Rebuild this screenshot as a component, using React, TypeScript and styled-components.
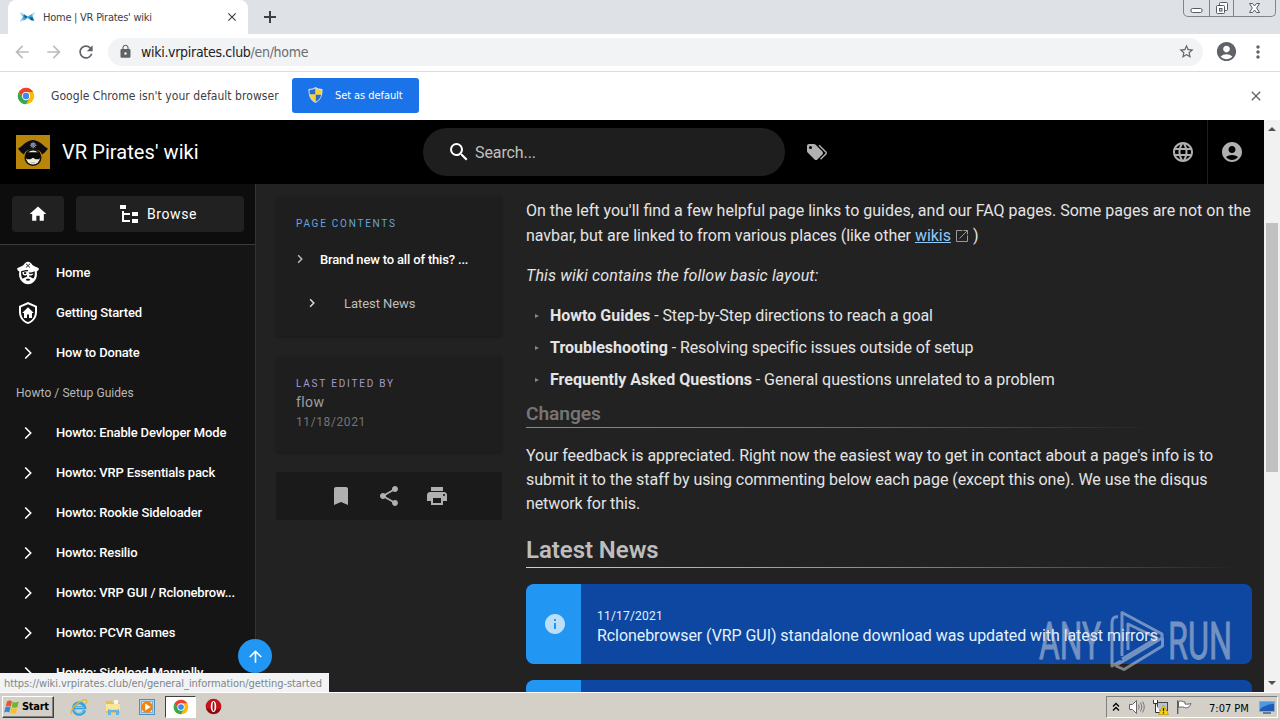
import { ReactNode } from "react";
import styled, { createGlobalStyle } from "styled-components";
import {
  MdAccountCircle,
  MdArrowBack,
  MdArrowForward,
  MdArrowUpward,
  MdBookmark,
  MdClose,
  MdHome,
  MdInfo,
  MdLanguage,
  MdLock,
  MdMoreVert,
  MdPrint,
  MdRefresh,
  MdSearch,
  MdShare,
  MdStarBorder,
} from "react-icons/md";

const GlobalStyle = createGlobalStyle`
  * { box-sizing: border-box; }
  body {
    margin: 0;
    overflow: hidden;
    font-family: Roboto, sans-serif;
  }
  svg { display: block; flex: none; }
  p, h2, h3, ul { margin: 0; padding: 0; }
`;

const uiFont = `"DejaVu Sans Condensed", "DejaVu Sans", sans-serif`;

const Screen = styled.div`
  position: relative;
  display: flex;
  flex-direction: column;
  width: 1280px;
  height: 720px;
  overflow: hidden;
  background: #fff;
`;

/* ---------- text ---------- */

interface LabelProps {
  $size?: number;
  $spacing?: number;
  $color?: string;
  $weight?: number;
}

const Label = styled.span<LabelProps>`
  font-size: ${(props) => props.$size ?? 13}px;
  letter-spacing: ${(props) => props.$spacing ?? 0}px;
  color: ${(props) => props.$color ?? "inherit"};
  font-weight: ${(props) => props.$weight ?? 400};
  white-space: nowrap;
`;

const UiLabel = styled(Label)`
  font-family: ${uiFont};
`;

/* ---------- browser frame ---------- */

const TabStrip = styled.div`
  display: flex;
  height: 34px;
  padding-left: 8px;
  background: #dee1e6;
`;

const Tab = styled.div`
  display: flex;
  align-items: center;
  width: 240px;
  padding: 0 9px 0 12px;
  background: #fff;
  border-radius: 8px 8px 0 0;
  color: #3c4043;
`;

const TabTitle = styled.div`
  flex: 1;
  padding-left: 8px;
  line-height: 16px;
`;

const NewTab = styled.div`
  display: flex;
  align-items: center;
  padding-left: 15px;
`;

const WindowControls = styled.div`
  display: flex;
  width: 93px;
  height: 17px;
  margin-left: auto;
  margin-right: 4px;
  border: 1px solid #80848c;
  border-top: 0;
  border-radius: 0 0 5px 5px;
`;

const WindowButton = styled.div<{ $width: number }>`
  display: flex;
  justify-content: center;
  width: ${(props) => props.$width}px;

  &:not(:last-child) {
    border-right: 1px solid #80848c;
  }
`;

const Toolbar = styled.div`
  display: flex;
  align-items: center;
  height: 38px;
  padding: 0 12px 2px;
  border-bottom: 1px solid #dadce0;
  color: #5f6368;
`;

const NavButton = styled.div<{ $dim?: boolean }>`
  width: 32px;
  color: ${(props) => (props.$dim ? "#babcbe" : "#5f6368")};
`;

const AddressBar = styled.div`
  display: flex;
  align-items: center;
  width: 1095px;
  height: 28px;
  padding: 0 8px 0 10px;
  border-radius: 14px;
  background: #f1f3f4;
`;

const Url = styled.div`
  flex: 1;
  padding-left: 8px;
`;

const ToolbarActions = styled.div`
  display: flex;
  align-items: center;
  gap: 10px;
  margin-left: 12px;
`;

const InfoBar = styled.div`
  display: flex;
  align-items: center;
  height: 48px;
  padding: 0 16px 1px 17px;
`;

const InfoText = styled.div`
  width: 241px;
  margin-left: 16px;
  padding-bottom: 2px;
`;

const DefaultButton = styled.div`
  display: flex;
  align-items: center;
  gap: 12px;
  width: 127px;
  height: 35px;
  margin-bottom: 1px;
  padding-left: 16px;
  border-radius: 3px;
  background: #1a73e8;
`;

const InfoClose = styled.div`
  margin-left: auto;
  color: #5f6368;
`;

/* ---------- wiki page ---------- */

const Viewport = styled.div`
  display: flex;
  height: 572px;
`;

const Page = styled.div`
  width: 1264px;
  height: 572px;
  overflow: hidden;
  background: #222;
  color: #fff;
`;

const Header = styled.header`
  display: flex;
  align-items: center;
  height: 64px;
  padding-left: 16px;
  background: #000;
`;

const SiteTitle = styled.div`
  width: 373px;
  padding-left: 12px;
`;

const SearchBox = styled.div`
  display: flex;
  align-items: center;
  gap: 4px;
  width: 362px;
  height: 48px;
  padding-left: 24px;
  border-radius: 24px;
  background: #1e1e1e;
`;

const TagButton = styled.div`
  margin-left: 20px;
  color: #b0b0b0;
`;

const HeaderAction = styled.div<{ $divider?: boolean }>`
  display: flex;
  align-items: center;
  justify-content: center;
  width: ${(props) => (props.$divider ? 57 : 48)}px;
  height: 64px;
  padding-right: ${(props) => (props.$divider ? 8 : 0)}px;
  border-left: ${(props) => (props.$divider ? "1px solid #1e1e1e" : "0")};
  color: #b0b0b0;
`;

const HeaderActions = styled.div`
  display: flex;
  margin-left: auto;
`;

const Columns = styled.div`
  display: flex;
  height: 508px;
`;

const Sidebar = styled.nav`
  width: 256px;
  border-right: 1px solid #333;
  background: #151515;
`;

const SidebarTop = styled.div`
  display: flex;
  gap: 12px;
  height: 61px;
  padding: 12px 11px 12px 12px;
  border-bottom: 1px solid #3a3a3a;
  background: #0d0d0d;
`;

const SidebarButton = styled.div<{ $grow?: boolean }>`
  display: flex;
  flex: ${(props) => (props.$grow ? "1" : "0 0 52px")};
  align-items: center;
  justify-content: center;
  gap: 6px;
  height: 36px;
  padding-right: ${(props) => (props.$grow ? 6 : 0)}px;
  border-radius: 4px;
  background: #212121;
`;

const NavList = styled.div`
  padding-top: 7px;
`;

const NavItem = styled.div`
  display: flex;
  align-items: center;
  gap: 16px;
  height: 40px;
  padding-left: 16px;
`;

const NavIcon = styled.div`
  display: flex;
  justify-content: center;
  width: 24px;
  padding-top: 1px;
`;

const NavHeading = styled.div`
  display: flex;
  align-items: center;
  height: 40px;
  padding: 2px 0 0 16px;
`;

const Aside = styled.aside`
  width: 226px;
  margin-left: 20px;
  padding-top: 12px;
`;

const Card = styled.div<{ $height: number }>`
  display: flex;
  flex-direction: column;
  height: ${(props) => props.$height}px;
  margin-bottom: 20px;
  padding: 20px 20px 0;
  border-radius: 4px;
  background: #1e1e1e;
  box-shadow: 0 1px 3px rgba(0, 0, 0, 0.3);
`;

const CardTitle = styled.div`
  height: 16px;
  line-height: 15px;
  font-size: 0;
`;

const CardLine = styled.div`
  height: 20px;
  line-height: 20px;
  font-size: 0;
`;

const TocItem = styled.div<{ $nested?: boolean }>`
  display: flex;
  align-items: center;
  gap: ${(props) => (props.$nested ? 24 : 12)}px;
  height: ${(props) => (props.$nested ? 46 : 42)}px;
  margin-top: ${(props) => (props.$nested ? 0 : 6)}px;
  margin-left: ${(props) => (props.$nested ? 8 : -4)}px;
`;

const ActionBar = styled.div`
  display: flex;
  align-items: center;
  justify-content: center;
  gap: 24px;
  height: 48px;
  background: #1a1a1a;
  color: #b0b0b0;
`;

const Article = styled.main`
  width: 726px;
  margin-left: 24px;
  padding-top: 15px;
  font-size: 16px;
  line-height: 24px;
  color: #e4e4e4;
`;

const Paragraph = styled.p<{ $gap: number; $top?: number }>`
  margin-top: ${(props) => props.$top ?? 0}px;
  margin-bottom: ${(props) => props.$gap}px;
`;

const Line = styled.span<{ $spacing?: number; $height?: number }>`
  display: flex;
  align-items: center;
  height: ${(props) => props.$height ?? 24}px;
  letter-spacing: ${(props) => props.$spacing ?? 0}px;
  white-space: pre;
`;

const WikiLink = styled.a`
  color: #90caf9;
  text-decoration: underline;
`;

const ExternalIcon = styled.span`
  padding: 0 3px;
  color: #9a9a9a;
`;

const Bullet = styled.li<{ $spacing: number }>`
  display: flex;
  align-items: center;
  height: 32px;
  padding-left: 9px;
  letter-spacing: ${(props) => props.$spacing}px;
  white-space: pre;

  strong {
    letter-spacing: 0;
  }

  &::before {
    content: "";
    width: 0;
    margin-right: 11px;
    border-left: 4px solid #888;
    border-top: 2.5px solid transparent;
    border-bottom: 2.5px solid transparent;
  }
`;

const SubHeading = styled.h3`
  height: 32px;
  padding-top: 6px;
  font-size: 19.2px;
  font-weight: 600;
  line-height: 24px;
  letter-spacing: -0.1px;
  color: #757575;
  background: linear-gradient(to right, #8a8a8a, #707070 40%, rgba(117, 117, 117, 0) 87%)
    bottom / 100% 1px no-repeat;
`;

const Heading = styled.h2`
  height: 36px;
  font-size: 24px;
  font-weight: 600;
  line-height: 37px;
  letter-spacing: -0.05px;
  color: #bdbdbd;
  background: linear-gradient(to right, #d0d0d0, #8a8a8a 50%, rgba(117, 117, 117, 0) 98%)
    bottom / 100% 1px no-repeat;
`;

const Notice = styled.div`
  display: flex;
  height: 80px;
  margin-top: 16px;
  overflow: hidden;
  border-radius: 8px;
  background: #0d47a1;
  color: #e3f2fd;
`;

const NoticeIcon = styled.div`
  display: flex;
  align-items: center;
  justify-content: center;
  width: 55px;
  padding-left: 2px;
  background: #2196f3;
  color: #bbdefb;
`;

const NoticeBody = styled.div`
  display: flex;
  flex-direction: column;
  padding: 22px 0 0 16px;
  line-height: 20px;
`;

const Scrollbar = styled.div`
  display: flex;
  flex-direction: column;
  align-items: center;
  width: 16px;
  height: 572px;
  padding: 7px 0;
  background: #f1f1f1;
`;

const ScrollThumb = styled.div`
  width: 12px;
  height: 249px;
  margin: 92px 0 auto;
  background: #c1c1c1;
`;

const ScrollArrow = styled.div<{ $down?: boolean }>`
  width: 0;
  border: 4px solid transparent;
  border-${(props) => (props.$down ? "top" : "bottom")}: 4px solid #505050;
  border-${(props) => (props.$down ? "bottom" : "top")}-width: 0;
`;

/* ---------- floating bits ---------- */

const ScrollTop = styled.div`
  position: absolute;
  left: 238px;
  top: 639px;
  display: flex;
  align-items: center;
  justify-content: center;
  width: 34px;
  height: 34px;
  border-radius: 50%;
  background: #2196f3;
  color: #fff;
`;

const StatusBubble = styled.div`
  position: absolute;
  left: 0;
  top: 673px;
  width: 329px;
  height: 19px;
  padding-left: 4px;
  background: #f1f3f4;
  line-height: 21px;
  font-size: 0;
`;

const Watermark = styled.svg`
  position: absolute;
  left: 1036px;
  top: 606px;
  opacity: 0.5;
`;

/* ---------- taskbar ---------- */

const Taskbar = styled.div`
  display: flex;
  align-items: center;
  height: 28px;
  padding: 0 2px;
  border-top: 1px solid #fff;
  background: #d4d0c8;
`;

const StartButton = styled.div`
  display: flex;
  align-items: center;
  gap: 2px;
  width: 52px;
  height: 22px;
  padding-left: 1px;
  border: 1px solid;
  border-color: #fff #404040 #404040 #fff;
  box-shadow: inset -1px -1px #808080;
  color: #000;
`;

const QuickLaunch = styled.div`
  display: flex;
  align-items: center;
  margin-left: 8px;
`;

const TaskIcon = styled.div<{ $active?: boolean }>`
  display: flex;
  align-items: center;
  justify-content: center;
  width: ${(props) => (props.$active ? 31 : 34)}px;
  height: 22px;
  margin-left: ${(props) => (props.$active ? 1 : 0)}px;
  border: ${(props) => (props.$active ? "1px solid" : "0")};
  border-color: #404040 #fff #fff #404040;
  background: ${(props) => (props.$active ? "#fff" : "transparent")};
`;

const Tray = styled.div`
  display: flex;
  align-items: center;
  width: 172px;
  height: 22px;
  margin-left: auto;
  padding-left: 5px;
  border: 1px solid;
  border-color: #808080 #fff #fff #808080;
`;

const TrayItem = styled.div<{ $width: number }>`
  width: ${(props) => props.$width}px;
`;

/* ---------- drawings ---------- */

function MdiIcon({ size = 24, path }: { size?: number; path: string }) {
  return (
    <svg width={size} height={size} viewBox="0 0 24 24" fill="currentColor">
      <path fillRule="evenodd" d={path} />
    </svg>
  );
}

const fileTree =
  "M3,3H9V7H3V3M15,10H21V14H15V10M15,17H21V21H15V17M13,13H7V18H13V20H7L5,20V9H7V11H13V13Z";
const tagMultiple =
  "M5.5,9A1.5,1.5 0 0,0 7,7.5A1.5,1.5 0 0,0 5.5,6A1.5,1.5 0 0,0 4,7.5A1.5,1.5 0 0,0 5.5,9M17.41,11.58C17.77,11.94 18,12.44 18,13C18,13.55 17.78,14.05 17.41,14.41L12.41,19.41C12.05,19.77 11.55,20 11,20C10.45,20 9.95,19.78 9.58,19.41L2.59,12.42C2.22,12.05 2,11.55 2,11V6C2,4.89 2.89,4 4,4H9C9.55,4 10.05,4.22 10.41,4.58L17.41,11.58M13.54,5.71L14.54,4.71L21.41,11.58C21.78,11.94 22,12.45 22,13C22,13.55 21.78,14.05 21.42,14.41L16.04,19.79L15.04,18.79L20.75,13L13.54,5.71Z";
const shieldHome =
  "M21,11C21,16.55 17.16,21.74 12,23C6.84,21.74 3,16.55 3,11V5L12,1L21,5V11M12,21C15.75,20 19,15.54 19,11.22V6.3L12,3.18L5,6.3V11.22C5,15.54 8.25,20 12,21M12,6.2L6.2,12H8V17H11V13.5H13V17H16V12H17.8Z";

function Chevron({ size = 24, color = "#fff" }: { size?: number; color?: string }) {
  return (
    <svg width={size} height={size} viewBox="0 0 24 24" fill="none">
      <path stroke={color} strokeWidth={size < 20 ? 2.2 : 1.6} d="M9.200 6.500l5.500 5.500-5.500 5.500" />
    </svg>
  );
}

function ExternalLinkIcon() {
  return (
    <svg width="16" height="16" viewBox="0 0 16 16" fill="none" stroke="currentColor">
      <path d="M8.500 2.500h-6v11h11v-6M9.500 2.500h4v4M13.500 2.500l-8 8" />
    </svg>
  );
}

function PirateIcon() {
  return (
    <svg width="24" height="24" viewBox="0 0 24 24">
      <path fill="#fff" d="M12 .8c2 0 3.200 1.600 4.500 3.100 1.800 1.600 4.300 1.800 6.500 3.600-.4 1.500-1.200 2.600-2.300 3.100.7 3.400.2 6.800-2.400 9.600-1.700 2-3.900 3-6.300 3s-4.600-1-6.300-3c-2.600-2.800-3.100-6.200-2.400-9.600C2.200 10.100 1.400 9 1 7.500c2.200-1.800 4.700-2 6.500-3.600C8.800 2.400 10 .8 12 .8z" />
      <path stroke="#151515" strokeWidth=".9" d="M10 2.800l4 3.700M14 2.800l-4 3.700" />
      <path fill="#151515" d="M5.200 10.300c2.200-.9 4.500-1.200 6.800-1.200v1.200c-2 0-4 .3-5.700 1 .1 1 .3 1.800.9 2.500 1.200.9 2.400.9 3.600.2l.4 1.400c-1.200.5-2.200 1.100-3.200 1.700-.7.400-1.300.4-1.900.1-.9-2-1.200-4.500-.9-6.900z" />
      <path fill="#151515" d="M8 11.300h2.200v1.700H8zM12.500 11.500c2 .2 4.300-.3 6.200-1.300.3 2.600 0 4.900-1 7-.7.200-1.400 0-2-.5-.8-.6-1.700-1-2.700-1.200v-1h2.500c.9-.3 1.700-1 1.900-1.900-1.300.4-2.500.5-3.900.4z" />
      <path fill="#151515" d="M10.200 18c1.200-.5 2.400-.5 3.600 0l.3 1.300c-1.400.6-2.800.6-4.200 0z" />
    </svg>
  );
}

function SiteLogo() {
  return (
    <svg width="34" height="34" viewBox="0 0 34 34">
      <rect width="34" height="34" fill="#b8860b" />
      <circle cx="17" cy="22.500" r="8.500" fill="#111" />
      <circle cx="17" cy="22.500" r="7" fill="#f3ead2" />
      <path fill="#0c0c12" d="M2 13.500C6 12 9 6 17 5c8 1 11 7 15 8.500-2 3-4 5-6 6-1-4-5-5-9-5s-8 1-9 5c-2-1-4-3-6-6z" />
      <path fill="#080808" d="M10 17.200h14V23l-1 1.200h-3.500L17 22.800l-2.500 1.400H11L10 23z" />
      <path stroke="#aaa" strokeWidth="1" d="M15 27.700h4" />
      <circle cx="17.200" cy="10.200" r="2" fill="none" stroke="#8e9cac" strokeWidth="1" />
      <path stroke="#8e9cac" strokeWidth=".8" d="M17.200 6.800v6.800M13.800 10.200h6.800M14.900 7.900l4.600 4.600M19.500 7.900l-4.600 4.600" />
    </svg>
  );
}

function ChromeLogo({ size = 16 }: { size?: number }) {
  return (
    <svg width={size} height={size} viewBox="0 0 48 48">
      <circle cx="24" cy="24" r="22" fill="#fbbc05" />
      <path fill="#ea4335" d="M24 13h19a22 22 0 0 0-38 0l9.500 16.500z" />
      <path fill="#34a853" d="M5 13a22 22 0 0 0 19 33l9.500-16.500L24 24l-9.500 5.500z" />
      <circle cx="24" cy="24" r="11" fill="#fff" />
      <circle cx="24" cy="24" r="8.500" fill="#4285f4" />
    </svg>
  );
}

function ShieldBadge() {
  return (
    <svg width="15" height="16" viewBox="0 0 15 16">
      <path fill="#d5dde8" d="M7.500 0C9 1.200 12 2 14.500 2c.3 6.500-1.500 11-7 14C2 13 .2 8.500.5 2 3 2 6 1.200 7.500 0z" />
      <path fill="#2a6cc8" d="M7.500 1.300V7.500H1.600V3C4 3 6 2.300 7.500 1.300zM7.500 7.500h5.600c-.5 3.500-2.100 5.600-5.600 7.300z" />
      <path fill="#f8d22e" d="M7.500 1.300C9 2.300 11 3 13.400 3c0 1.700 0 3.200-.3 4.500H7.500zM1.800 7.500h5.700v7.300C4 13.100 2.300 11 1.800 7.500z" />
    </svg>
  );
}

function Favicon() {
  return (
    <svg width="15" height="12" viewBox="0 0 15 12">
      <path fill="#3fa9dd" d="M0 1.500l4 1.500 3.500 2.500L11 3.500 15 1.500 12.500 5 14.500 10 11 9.500 7.500 7 5 9 0 10.500 3 6z" />
      <path fill="#1d5380" d="M4 4l3.500 1.500L5 7.500zM9.500 6l3 .5 1 3-3-1z" />
      <path fill="#c5eafa" d="M11.500 4l3.500-2.500-2 3zM0 1.500L4 3 3 4.500zM0 10.500L3 8l1 1.500z" />
    </svg>
  );
}

function WindowsFlag() {
  return (
    <svg width="16" height="16" viewBox="0 0 16 16">
      <path fill="#e8562a" d="M3 2.500C5 1 6.500 1.500 8 2.300L6.800 7.500C5.200 6.600 3.500 6.500 1.700 7.500z" />
      <path fill="#6fb43a" d="M8.800 2.700c2 1 3.700.9 6-.1L13.500 8c-2 1-3.800.9-5.800-.1z" />
      <path fill="#3d83d6" d="M1.500 8.300c1.800-1 3.500-.9 5.100 0l-1.300 5.200C3.700 12.600 2 12.600.2 13.500z" />
      <path fill="#f5c225" d="M7.500 8.800c2 1 3.800.9 5.800-.1L12 13.900c-2 .9-3.800.9-5.800-.1z" />
    </svg>
  );
}

function ExplorerIcon() {
  return (
    <svg width="18" height="18" viewBox="0 0 18 18">
      <path fill="none" stroke="#35a3e0" strokeWidth="3" d="M14.600 12.300A5.700 5.700 0 1 1 14.800 9.800H5" />
      <path fill="none" stroke="#a5dcf5" strokeWidth=".8" d="M13.500 13.500A5.800 5.800 0 0 1 4 11.500M5 9.400h9" />
      <path fill="none" stroke="#e9b92d" strokeWidth="1.300" d="M2 15.500c-3-.5 1-7 6-10.500s9-4.500 8.800-2c0 1-.5 2-1.300 3" />
    </svg>
  );
}

function FolderIcon() {
  return (
    <svg width="18" height="18" viewBox="0 0 18 18">
      <path fill="#e8bf55" d="M2 3h6l1 2h7v10H2z" />
      <path fill="#f9e69c" d="M2 6h14v7H2z" />
      <path fill="#f7f7e8" d="M10 2h4v4h-4z" />
      <path fill="#63b6e2" d="M4 11h11v6h-3v-3H7v3H4z" />
      <path fill="#b8e2f5" d="M5 11h9v1H5z" />
    </svg>
  );
}

function PlayerIcon() {
  return (
    <svg width="16" height="16" viewBox="0 0 16 16">
      <rect x=".5" y=".5" width="15" height="15" fill="#b5d5ee" stroke="#4c8fc4" />
      <rect x="2.500" y="2.500" width="11" height="11" fill="#ddebf4" stroke="#7fb0d6" />
      <circle cx="8" cy="8" r="5.700" fill="#f0860e" />
      <path fill="#fff" d="M6.200 4.600v6.800L11.600 8z" />
    </svg>
  );
}

function OperaIcon() {
  return (
    <svg width="17" height="17" viewBox="0 0 17 17">
      <circle cx="8.500" cy="8.500" r="7.800" fill="#c4141a" />
      <path fill="#8a0a10" d="M1 10a7.800 7.800 0 0 0 15 0c-3 2-12 2-15 0z" />
      <ellipse cx="8.500" cy="8.500" rx="2.700" ry="5.500" fill="#fff" />
      <ellipse cx="8.500" cy="8.500" rx="1" ry="4.500" fill="#a00e14" />
    </svg>
  );
}

function MinimizeGlyph() {
  return (
    <svg width="13" height="16" viewBox="0 0 13 16">
      <rect x="1" y="8.500" width="11" height="4" rx="1.500" fill="#fff" stroke="#555a63" />
    </svg>
  );
}

function RestoreGlyph() {
  return (
    <svg width="14" height="16" viewBox="0 0 14 16">
      <rect x="4.500" y="2.500" width="8" height="8" rx="1" fill="#fff" stroke="#555a63" />
      <rect x="1.500" y="5.500" width="8" height="8" rx="1" fill="#fff" stroke="#555a63" />
      <rect x="4.500" y="8.500" width="2.500" height="2.500" fill="#dee1e6" stroke="#555a63" />
    </svg>
  );
}

function CloseGlyph() {
  return (
    <svg width="13" height="16" viewBox="0 0 13 16">
      <path fill="#fff" stroke="#555a63" d="M1.500 3.500h3l2 2.500 2-2.500h3L8.700 8l2.800 4.500h-3l-2-2.500-2 2.500h-3L4.300 8z" />
    </svg>
  );
}

function SpeakerIcon() {
  return (
    <svg width="17" height="16" viewBox="0 0 17 16">
      <path fill="#fff" stroke="#666" d="M1.500 5.500h3l4-4v13l-4-4h-3z" />
      <path fill="none" stroke="#777" d="M10.500 5.500q1.500 2.500 0 5M12.500 3.500q3 4.500 0 9M14.500 2.500q3.500 5.500 0 11" />
    </svg>
  );
}

function NetworkIcon() {
  return (
    <svg width="17" height="16" viewBox="0 0 17 16">
      <rect x="5.500" y="3.500" width="10" height="8" fill="#b9c4cf" stroke="#444" />
      <path fill="#fff" stroke="#333" d="M1.500 1v3.500h4V1M3.500 4.500v9h5" />
      <path fill="#ffd500" stroke="#b08a00" strokeWidth=".6" d="M11.500 6l5 9.500h-10z" />
      <path stroke="#222" strokeWidth="1.300" d="M11.500 9v3.200M11.500 13.200v1.200" />
    </svg>
  );
}

function FlagIcon() {
  return (
    <svg width="17" height="16" viewBox="0 0 17 16">
      <path fill="#fff" stroke="#666" d="M2.500 2.500c3-1.500 4 .5 6.500.5v2c2 .5 4 0 6-.5-1.500 4-4 5-6.500 4s-4-.5-6 0z" />
      <path stroke="#555" strokeWidth="1.300" d="M1.700 1.500v13.500" />
    </svg>
  );
}

function DesktopIcon() {
  return (
    <svg width="16" height="16" viewBox="0 0 16 16">
      <rect x=".5" y="2.500" width="15" height="10" fill="#1f5cb5" stroke="#8fa9c6" />
      <path fill="#4f97df" d="M1 3h14v2C10 5 5 7 1 10z" />
      <path fill="#6b7b8c" d="M4 13h8v2H4z" />
    </svg>
  );
}

function PlayMark() {
  return (
    <Watermark width="206" height="68" viewBox="0 0 206 68">
      <g fill="#d9dde4" fontFamily="Roboto, sans-serif" fontSize="51" fontWeight="400" stroke="#d9dde4" strokeWidth=".8">
        <text x="3" y="53" textLength="62" lengthAdjust="spacingAndGlyphs">
          ANY
        </text>
        <text x="132" y="53" textLength="64" lengthAdjust="spacingAndGlyphs">
          RUN
        </text>
      </g>
      <g fill="none" stroke="#d9dde4" strokeWidth="3" strokeLinejoin="round">
        <path d="M82 11q-6-1-6 6v43l9-5" />
        <path d="M86 50V6.500L126 28v4L79 60" />
        <path d="M92 44V18l29 14-35 21" />
        <path d="M80 60l8 3.500L126.500 40v-8" />
      </g>
    </Watermark>
  );
}

/* ---------- sections ---------- */

interface NavEntry {
  text: string;
  icon?: ReactNode;
}

const mainLinks: NavEntry[] = [
  { text: "Home", icon: <PirateIcon /> },
  { text: "Getting Started", icon: <MdiIcon path={shieldHome} /> },
  { text: "How to Donate" },
];

const guideLinks: NavEntry[] = [
  { text: "Howto: Enable Devloper Mode" },
  { text: "Howto: VRP Essentials pack" },
  { text: "Howto: Rookie Sideloader" },
  { text: "Howto: Resilio" },
  { text: "Howto: VRP GUI / Rclonebrow..." },
  { text: "Howto: PCVR Games" },
  { text: "Howto: Sideload Manually" },
];

function NavLink({ text, icon }: NavEntry) {
  return (
    <NavItem>
      <NavIcon>{icon ?? <Chevron />}</NavIcon>
      <Label $weight={500} $spacing={-0.16}>
        {text}
      </Label>
    </NavItem>
  );
}

function BrowserFrame() {
  return (
    <>
      <TabStrip>
        <Tab>
          <Favicon />
          <TabTitle>
            <UiLabel $size={11} $spacing={-0.25}>
              Home | VR Pirates' wiki
            </UiLabel>
          </TabTitle>
          <MdClose size={14} />
        </Tab>
        <NewTab>
          <svg width="14" height="14" viewBox="0 0 14 14">
            <path stroke="#3c4043" strokeWidth="2" d="M7 1v12M1 7h12" />
          </svg>
        </NewTab>
        <WindowControls>
          <WindowButton $width={26}>
            <MinimizeGlyph />
          </WindowButton>
          <WindowButton $width={25}>
            <RestoreGlyph />
          </WindowButton>
          <WindowButton $width={41}>
            <CloseGlyph />
          </WindowButton>
        </WindowControls>
      </TabStrip>
      <Toolbar>
        <NavButton $dim>
          <MdArrowBack size={20} />
        </NavButton>
        <NavButton $dim>
          <MdArrowForward size={20} />
        </NavButton>
        <NavButton>
          <MdRefresh size={20} />
        </NavButton>
        <AddressBar>
          <MdLock size={15} />
          <Url>
            <UiLabel $size={14} $spacing={-0.3} $color="#202124">
              wiki.vrpirates.club
            </UiLabel>
            <UiLabel $size={14} $spacing={-0.3} $color="#6a6e73">
              /en/home
            </UiLabel>
          </Url>
          <MdStarBorder size={17} />
        </AddressBar>
        <ToolbarActions>
          <MdAccountCircle size={23} />
          <MdMoreVert size={20} />
        </ToolbarActions>
      </Toolbar>
    </>
  );
}

function WikiHeader() {
  return (
    <Header>
      <SiteLogo />
      <SiteTitle>
        <Label $size={20} $spacing={0.07}>
          VR Pirates' wiki
        </Label>
      </SiteTitle>
      <SearchBox>
        <MdSearch size={24} />
        <Label $size={16} $spacing={-0.1} $color="#c0c0c0">
          Search...
        </Label>
      </SearchBox>
      <TagButton>
        <MdiIcon path={tagMultiple} />
      </TagButton>
      <HeaderActions>
        <HeaderAction>
          <MdLanguage size={24} />
        </HeaderAction>
        <HeaderAction $divider>
          <MdAccountCircle size={24} />
        </HeaderAction>
      </HeaderActions>
    </Header>
  );
}

function PageAside() {
  return (
    <Aside>
      <Card $height={140}>
        <CardTitle>
          <Label $size={10} $spacing={1.75} $color="#64a5dd">
            PAGE CONTENTS
          </Label>
        </CardTitle>
        <TocItem>
          <Chevron size={16} color="#bbb" />
          <Label $weight={500} $spacing={-0.17}>
            Brand new to all of this? ...
          </Label>
        </TocItem>
        <TocItem $nested>
          <Chevron size={16} color="#ddd" />
          <Label $color="#bdbdbd" $spacing={-0.05}>
            Latest News
          </Label>
        </TocItem>
      </Card>
      <Card $height={96}>
        <CardTitle>
          <Label $size={10} $spacing={1.8} $color="#a39bd0">
            LAST EDITED BY
          </Label>
        </CardTitle>
        <CardLine>
          <Label $size={14} $color="#a0a0a0" $spacing={0.4}>
            flow
          </Label>
        </CardLine>
        <CardLine>
          <Label $size={12} $color="#757575" $spacing={0.6}>
            11/18/2021
          </Label>
        </CardLine>
      </Card>
      <ActionBar>
        <MdBookmark size={24} />
        <MdShare size={24} />
        <MdPrint size={24} />
      </ActionBar>
    </Aside>
  );
}

function WikiArticle() {
  return (
    <Article>
      <Paragraph $gap={15}>
        <Line>On the left you'll find a few helpful page links to guides, and our FAQ pages. Some pages are not on the</Line>
        <Line $height={26} $spacing={-0.04}>
          navbar, but are linked to from various places (like other <WikiLink>wikis</WikiLink>
          <ExternalIcon>
            <ExternalLinkIcon />
          </ExternalIcon>
          )
        </Line>
      </Paragraph>
      <Paragraph $gap={12}>
        <Line $spacing={0.14}>
          <em>This wiki contains the follow basic layout:</em>
        </Line>
      </Paragraph>
      <ul>
        <Bullet $spacing={-0.07}>
          <strong>Howto Guides</strong> - Step-by-Step directions to reach a goal
        </Bullet>
        <Bullet $spacing={-0.11}>
          <strong>Troubleshooting</strong> - Resolving specific issues outside of setup
        </Bullet>
        <Bullet $spacing={-0.05}>
          <strong>Frequently Asked Questions</strong> - General questions unrelated to a problem
        </Bullet>
      </ul>
      <SubHeading>Changes</SubHeading>
      <Paragraph $top={16} $gap={16}>
        <Line $spacing={-0.04}>Your feedback is appreciated. Right now the easiest way to get in contact about a page's info is to</Line>
        <Line $spacing={-0.05}>submit it to the staff by using commenting below each page (except this one). We use the disqus</Line>
        <Line $spacing={-0.1}>network for this.</Line>
      </Paragraph>
      <Heading>Latest News</Heading>
      <Notice>
        <NoticeIcon>
          <MdInfo size={24} />
        </NoticeIcon>
        <NoticeBody>
          <Label $size={12} $spacing={0.2}>
            11/17/2021
          </Label>
          <Label $size={16} $spacing={-0.07}>
            Rclonebrowser (VRP GUI) standalone download was updated with latest mirrors
          </Label>
        </NoticeBody>
      </Notice>
      <Notice>
        <NoticeIcon />
      </Notice>
    </Article>
  );
}

function App() {
  return (
    <Screen>
      <GlobalStyle />
      <BrowserFrame />
      <InfoBar>
        <ChromeLogo size={18} />
        <InfoText>
          <UiLabel $size={12} $spacing={0.05} $color="#3c4043">
            Google Chrome isn't your default browser
          </UiLabel>
        </InfoText>
        <DefaultButton>
          <ShieldBadge />
          <UiLabel $size={11} $spacing={-0.07} $color="#fff">
            Set as default
          </UiLabel>
        </DefaultButton>
        <InfoClose>
          <MdClose size={16} />
        </InfoClose>
      </InfoBar>
      <Viewport>
        <Page>
          <WikiHeader />
          <Columns>
            <Sidebar>
              <SidebarTop>
                <SidebarButton>
                  <MdHome size={20} />
                </SidebarButton>
                <SidebarButton $grow>
                  <MdiIcon path={fileTree} />
                  <Label $size={14} $spacing={0.6}>
                    Browse
                  </Label>
                </SidebarButton>
              </SidebarTop>
              <NavList>
                {mainLinks.map((link) => (
                  <NavLink key={link.text} {...link} />
                ))}
                <NavHeading>
                  <Label $size={12} $spacing={0.05} $color="#b8b8b8">
                    Howto / Setup Guides
                  </Label>
                </NavHeading>
                {guideLinks.map((link) => (
                  <NavLink key={link.text} {...link} />
                ))}
              </NavList>
            </Sidebar>
            <PageAside />
            <WikiArticle />
          </Columns>
        </Page>
        <Scrollbar>
          <ScrollArrow />
          <ScrollThumb />
          <ScrollArrow $down />
        </Scrollbar>
      </Viewport>
      <Taskbar>
        <StartButton>
          <WindowsFlag />
          <UiLabel $size={11} $weight={700} $spacing={-0.3}>
            Start
          </UiLabel>
        </StartButton>
        <QuickLaunch>
          <TaskIcon>
            <ExplorerIcon />
          </TaskIcon>
          <TaskIcon>
            <FolderIcon />
          </TaskIcon>
          <TaskIcon>
            <PlayerIcon />
          </TaskIcon>
          <TaskIcon $active>
            <ChromeLogo />
          </TaskIcon>
          <TaskIcon>
            <OperaIcon />
          </TaskIcon>
        </QuickLaunch>
        <Tray>
          <TrayItem $width={16}>
            <svg width="8" height="12" viewBox="0 0 8 12">
              <path fill="none" stroke="#000" strokeWidth="1.300" d="M1 5.500L4 2.500l3 3M1 9.500l3-3 3 3" />
            </svg>
          </TrayItem>
          <TrayItem $width={24}>
            <SpeakerIcon />
          </TrayItem>
          <TrayItem $width={24}>
            <NetworkIcon />
          </TrayItem>
          <TrayItem $width={33}>
            <FlagIcon />
          </TrayItem>
          <TrayItem $width={50}>
            <UiLabel $size={11} $color="#000">
              7:07 PM
            </UiLabel>
          </TrayItem>
          <DesktopIcon />
        </Tray>
      </Taskbar>
      <ScrollTop>
        <MdArrowUpward size={19} />
      </ScrollTop>
      <StatusBubble>
        <UiLabel $size={11} $spacing={-0.07} $color="#80868b">
          https://wiki.vrpirates.club/en/general_information/getting-started
        </UiLabel>
      </StatusBubble>
      <PlayMark />
    </Screen>
  );
}

export default App;
